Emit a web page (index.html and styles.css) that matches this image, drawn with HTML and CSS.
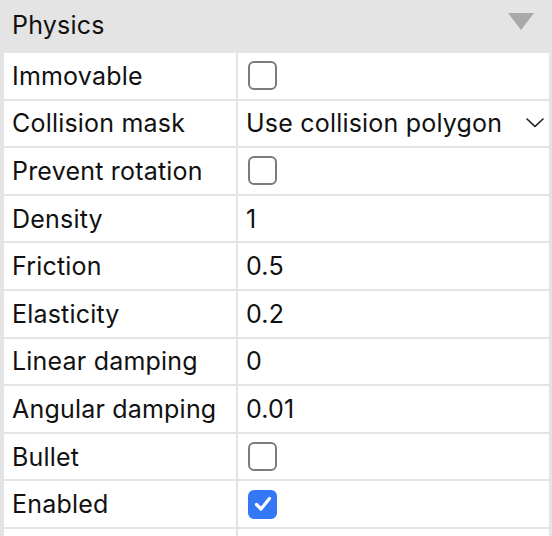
FILE: index.html
```html
<!DOCTYPE html>
<html>
<head>
<meta charset="utf-8">
<link rel="stylesheet" href="styles.css">
</head>
<body>
<div class="panel">
  <div class="header">
    <span class="title">Physics</span>
    <svg class="collapse" width="26" height="17" viewBox="0 0 26 17"><polygon points="0,0 26,0 13,17" fill="#a9a9a9"/></svg>
  </div>
  <div class="props">
    <div class="cell label">Immovable</div>
    <div class="cell value"><span class="check"></span></div>

    <div class="cell label">Collision mask</div>
    <div class="cell value select">
      <span>Use collision polygon</span>
      <svg class="chevron" width="18" height="10" viewBox="0 0 18 10"><polyline points="1,1 9,8.5 17,1" fill="none" stroke="#1a1a1a" stroke-width="1.6" stroke-linecap="round" stroke-linejoin="round"/></svg>
    </div>

    <div class="cell label">Prevent rotation</div>
    <div class="cell value"><span class="check"></span></div>

    <div class="cell label">Density</div>
    <div class="cell value">1</div>

    <div class="cell label">Friction</div>
    <div class="cell value">0.5</div>

    <div class="cell label">Elasticity</div>
    <div class="cell value">0.2</div>

    <div class="cell label">Linear damping</div>
    <div class="cell value">0</div>

    <div class="cell label">Angular damping</div>
    <div class="cell value">0.01</div>

    <div class="cell label">Bullet</div>
    <div class="cell value"><span class="check"></span></div>

    <div class="cell label">Enabled</div>
    <div class="cell value"><span class="check checked"><svg width="18" height="16" viewBox="0 0 18 16"><polyline points="2.5,8.5 7,13 15.5,2.5" fill="none" stroke="#fff" stroke-width="3.2" stroke-linecap="round" stroke-linejoin="round"/></svg></span></div>

    <div class="cell"></div>
    <div class="cell"></div>
  </div>
</div>
</body>
</html>
```

FILE: styles.css
```css
html, body {
  margin: 0;
  padding: 0;
  background: #e4e4e4;
  overflow: hidden;
}

.panel {
  width: 552px;
  height: 536px;
  background: #e4e4e4;
  font-family: Inter, "Liberation Sans", sans-serif;
  font-size: 25px;
  letter-spacing: 0.2px;
  color: #111;
  overflow: hidden;
}

.header {
  height: 53px;
  display: flex;
  align-items: center;
  justify-content: space-between;
  padding: 0 18px 0 12px;
  box-sizing: border-box;
}

.title {
  margin-top: -4px;
}

.collapse {
  display: block;
  margin-top: -10px;
}

.props {
  display: grid;
  grid-template-columns: 232px 311px;
  grid-auto-rows: 45.6px;
  column-gap: 2px;
  row-gap: 2px;
  padding: 0 3px 0 4px;
}

.cell {
  background: #fff;
  display: flex;
  align-items: center;
}

.label {
  padding-left: 8px;
}

.value {
  padding-left: 8px;
}

.select {
  justify-content: space-between;
  padding-right: 5px;
}

.chevron {
  display: block;
}

.check {
  box-sizing: border-box;
  width: 29px;
  height: 29px;
  border: 2px solid #7b7b7b;
  border-radius: 6px;
  margin-left: 2px;
  display: flex;
  align-items: center;
  justify-content: center;
}

.check.checked {
  background: #3478f6;
  border-color: #3478f6;
}

.check svg {
  display: block;
}
```
